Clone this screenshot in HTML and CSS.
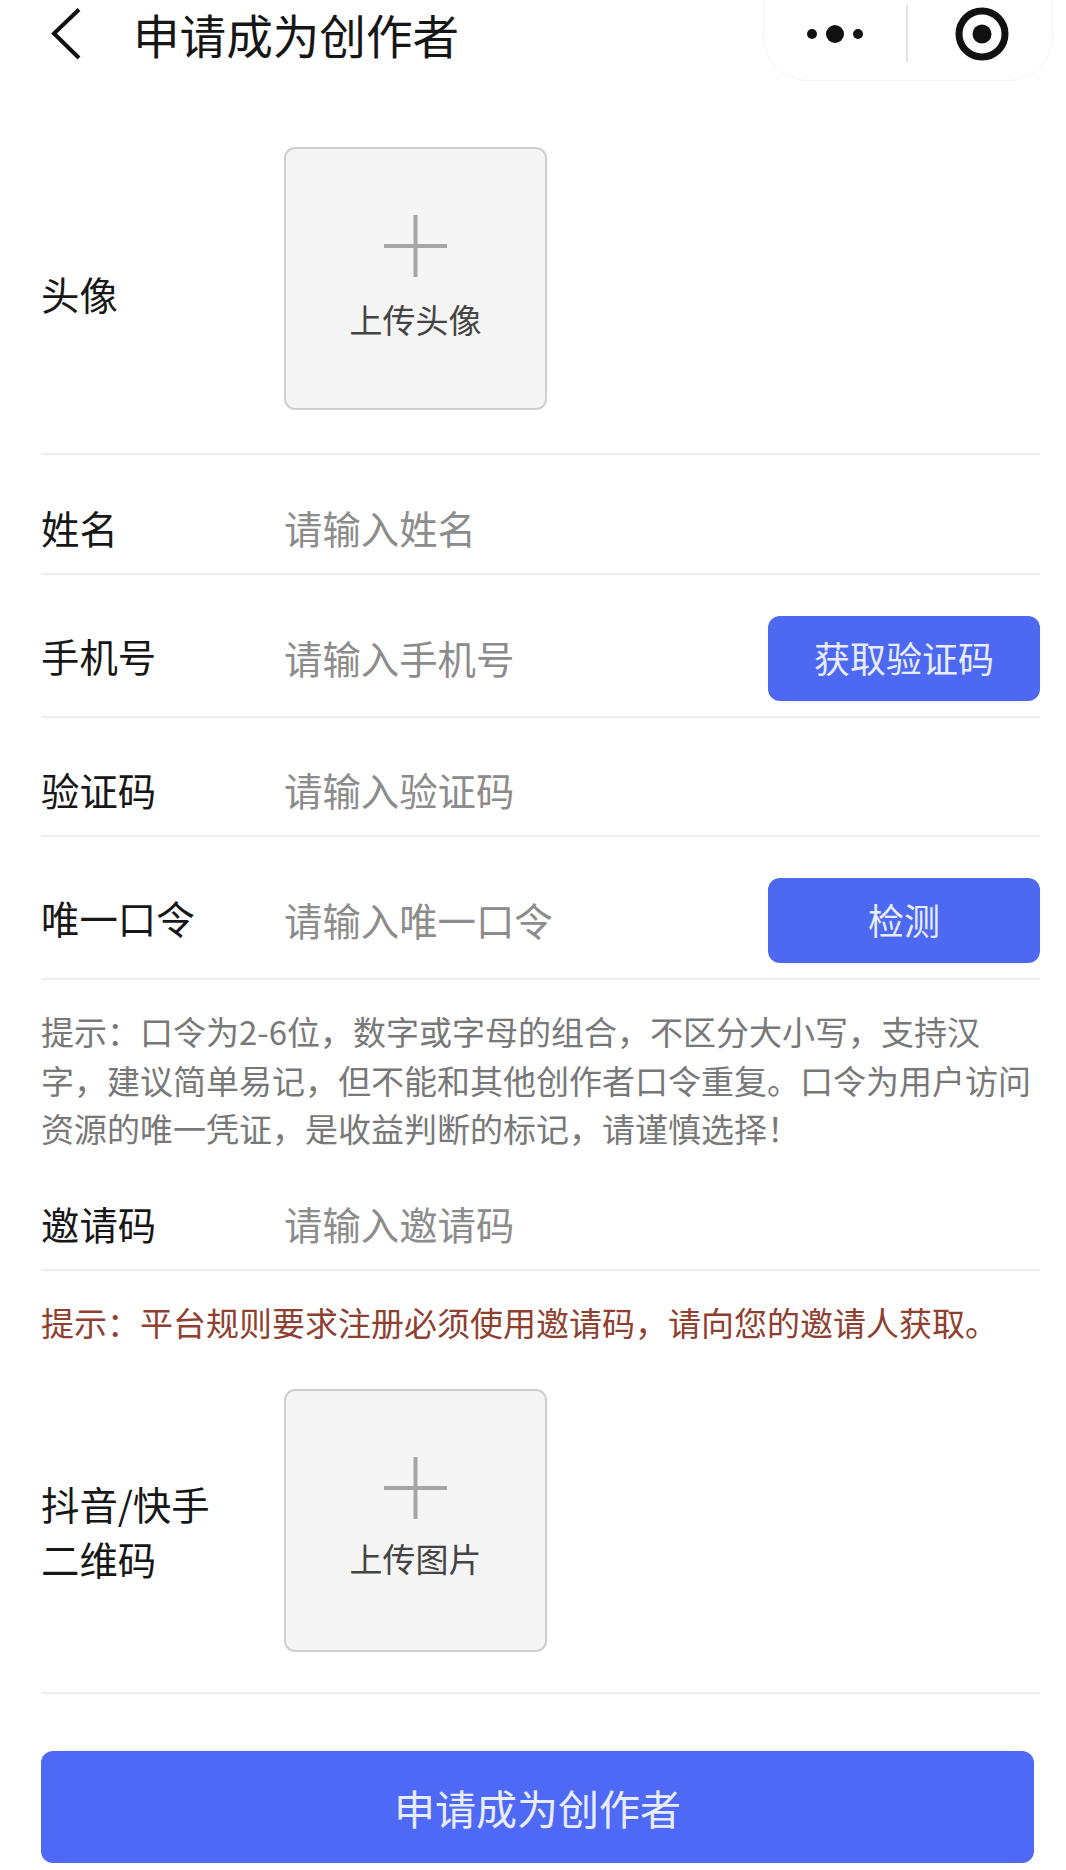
FILE: index.html
```html
<!DOCTYPE html>
<html lang="zh-CN">
<head>
<meta charset="utf-8">
<title>申请成为创作者</title>
<link rel="stylesheet" href="styles.css">
</head>
<body>
<header class="nav">
  <svg class="back" viewBox="0 0 32 52" width="32" height="52" aria-hidden="true"><path d="M29 1.5 L4 25.5 L29 50" fill="none" stroke="#111" stroke-width="4"/></svg>
  <h1 class="nav-title">申请成为创作者</h1>
  <div class="capsule">
    <svg class="dots" viewBox="0 0 56 20" width="56" height="20" aria-hidden="true"><circle cx="5" cy="10" r="5" fill="#111"/><circle cx="28" cy="10" r="9" fill="#111"/><circle cx="51" cy="10" r="5" fill="#111"/></svg>
    <span class="capsule-divider"></span>
    <svg class="target" viewBox="0 0 56 56" width="56" height="56" aria-hidden="true"><circle cx="28" cy="28" r="23" fill="none" stroke="#111" stroke-width="7"/><circle cx="28" cy="28" r="9.5" fill="#111"/></svg>
  </div>
</header>
<main class="form">
  <section class="row row-avatar">
    <div class="label label-upload">头像</div>
    <div class="upload">
      <svg class="plus" viewBox="0 0 63 62" width="63" height="62" aria-hidden="true"><path d="M31.5 0V62" stroke="#a6a6a6" stroke-width="4"/><path d="M0 31H63" stroke="#a6a6a6" stroke-width="4"/></svg>
      <span class="upload-text">上传头像</span>
    </div>
  </section>
  <section class="row row-name">
    <div class="label">姓名</div>
    <span class="placeholder">请输入姓名</span>
  </section>
  <section class="row row-phone">
    <div class="label label-raised">手机号</div>
    <span class="placeholder placeholder-raised">请输入手机号</span>
    <button class="btn-small" type="button">获取验证码</button>
  </section>
  <section class="row row-code">
    <div class="label">验证码</div>
    <span class="placeholder">请输入验证码</span>
  </section>
  <section class="row row-token">
    <div class="label label-raised">唯一口令</div>
    <span class="placeholder placeholder-raised">请输入唯一口令</span>
    <button class="btn-small" type="button">检测</button>
  </section>
  <p class="hint">提示&#xFF1A;口令为2-6位&#xFF0C;数字或字母的组合&#xFF0C;不区分大小写&#xFF0C;支持汉字&#xFF0C;建议简单易记&#xFF0C;但不能和其他创作者口令重复&#x3002;口令为用户访问资源的唯一凭证&#xFF0C;是收益判断的标记&#xFF0C;请谨慎选择&#xFF01;</p>
  <section class="row row-invite">
    <div class="label">邀请码</div>
    <span class="placeholder">请输入邀请码</span>
  </section>
  <p class="hint hint-red">提示&#xFF1A;平台规则要求注册必须使用邀请码&#xFF0C;请向您的邀请人获取&#x3002;</p>
  <section class="row row-qr">
    <div class="label label-upload">抖音/快手<br>二维码</div>
    <div class="upload">
      <svg class="plus" viewBox="0 0 63 62" width="63" height="62" aria-hidden="true"><path d="M31.5 0V62" stroke="#a6a6a6" stroke-width="4"/><path d="M0 31H63" stroke="#a6a6a6" stroke-width="4"/></svg>
      <span class="upload-text">上传图片</span>
    </div>
  </section>
  <button class="submit" type="button">申请成为创作者</button>
</main>
</body>
</html>
```
FILE: styles.css
```css
* { box-sizing: border-box; }
html, body { margin: 0; padding: 0; }
body {
  width: 1066px;
  height: 1870px;
  overflow: hidden;
  background: #fff;
  color: #111;
  font-family: "Noto Sans CJK SC", "Liberation Sans", sans-serif;
}
.nav {
  height: 81px;
  display: flex;
  align-items: center;
  padding: 0 13px 0 50px;
}
.back { flex: none; margin-bottom: 13px; }
.nav-title {
  margin: 0 0 14px 51px;
  font-size: 46.6px;
  line-height: 60px;
  font-weight: 400;
  color: #161616;
}
.capsule {
  margin-left: auto;
  align-self: flex-end;
  width: 290px;
  height: 130px;
  flex: none;
  display: flex;
  align-items: flex-end;
  padding: 0 0 18px 43px;
  border: 1px solid #f3f3f3;
  border-radius: 45px;
}
.dots { margin-bottom: 18px; flex: none; }
.capsule-divider {
  width: 2px;
  height: 57px;
  margin-left: 43px;
  background: #e4e4e4;
  flex: none;
}
.target { margin-left: 46px; flex: none; }
.form { padding: 0 26px 0 41px; }
.row {
  display: flex;
  align-items: center;
  border-bottom: 2px solid #eeeeee;
}
.label {
  width: 243px;
  flex: none;
  font-size: 38.4px;
  line-height: 74px;
  color: #171717;
}
.label-raised { margin-bottom: 7px; }
.label-upload {
  line-height: 55px;
  padding-top: 29px;
}
.row-qr .label-upload { padding-top: 22px; }
.placeholder {
  font-size: 38.4px;
  line-height: 74px;
  color: #8c8c8c;
}
.placeholder-raised { margin-bottom: 3px; }
.row-avatar { padding: 66px 0 43px; }
.row-name { padding: 35px 0 9px; }
.row-phone { padding: 41px 0 15px; }
.row-code { padding: 34px 0 9px; }
.row-token { padding: 41px 0 15px; }
.row-invite { margin-top: 33px; padding-bottom: 9px; }
.row-qr { padding: 43px 0 40px; }
.upload {
  width: 263px;
  height: 263px;
  flex: none;
  display: flex;
  flex-direction: column;
  align-items: center;
  padding-top: 66px;
  background: #f5f5f6;
  border: 2px solid #cfcfcf;
  border-radius: 11px;
}
.upload-text {
  margin-top: 22px;
  font-size: 33px;
  line-height: 40px;
  color: #444444;
}
.row-qr .upload-text { margin-top: 19px; }
.btn-small {
  margin-left: auto;
  width: 272px;
  height: 85px;
  flex: none;
  padding: 0 0 4px;
  border: 0;
  border-radius: 12px;
  background: #4d69f1;
  color: #e8ecfb;
  font: inherit;
  font-size: 36px;
}
.hint {
  margin: 0;
  padding-top: 27px;
  font-size: 33px;
  line-height: 48.5px;
  color: #787878;
}
.hint-red {
  padding-top: 27px;
  line-height: 48px;
  color: #8f3f30;
}
.submit {
  display: block;
  width: 993px;
  height: 112px;
  margin-top: 57px;
  padding: 0;
  border: 0;
  border-radius: 12px;
  background: #4d69f5;
  color: #e8ecfb;
  font: inherit;
  font-size: 41px;
}
```
